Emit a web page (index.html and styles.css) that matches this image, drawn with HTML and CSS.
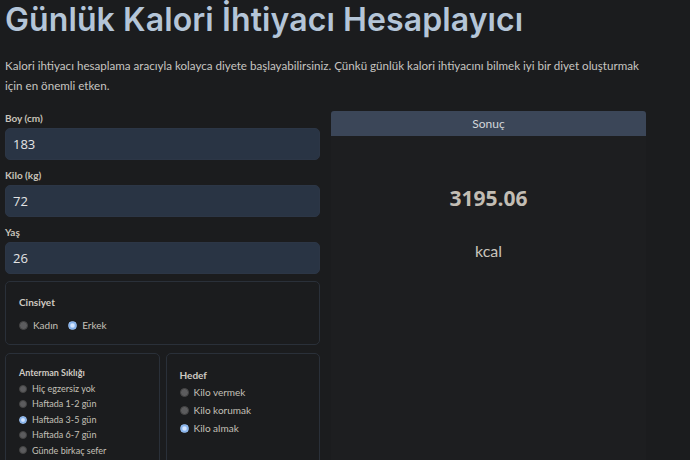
FILE: index.html
```html
<!DOCTYPE html>
<html lang="tr">
<head>
  <meta charset="utf-8">
  <title>Günlük Kalori İhtiyacı Hesaplayıcı</title>
  <link rel="stylesheet" href="styles.css">
</head>
<body>
  <h1 class="title">Günlük Kalori İhtiyacı Hesaplayıcı</h1>
  <p class="intro">Kalori ihtiyacı hesaplama aracıyla kolayca diyete başlayabilirsiniz. Çünkü günlük kalori ihtiyacını bilmek iyi bir diyet oluşturmak için en önemli etken.</p>

  <div class="layout">
    <!-- giriş formu -->
    <div class="form">
      <label class="field-label">Boy (cm)</label>
      <input class="field" type="text" value="183">
      <label class="field-label">Kilo (kg)</label>
      <input class="field" type="text" value="72">
      <label class="field-label">Yaş</label>
      <input class="field" type="text" value="26">

      <div class="box box-gender">
        <div class="box-title">Cinsiyet</div>
        <div class="inline-radios">
          <label class="radio"><input type="radio" name="gender"> Kadın</label>
          <label class="radio"><input type="radio" name="gender" checked> Erkek</label>
        </div>
      </div>

      <div class="box-row">
        <div class="box box-small">
          <div class="box-title small">Anterman Sıklığı</div>
          <label class="radio small"><input type="radio" name="act"> Hiç egzersiz yok</label>
          <label class="radio small"><input type="radio" name="act"> Haftada 1-2 gün</label>
          <label class="radio small"><input type="radio" name="act" checked> Haftada 3-5 gün</label>
          <label class="radio small"><input type="radio" name="act"> Haftada 6-7 gün</label>
          <label class="radio small"><input type="radio" name="act"> Günde birkaç sefer</label>
        </div>
        <div class="box box-goal">
          <div class="box-title goal-title">Hedef</div>
          <label class="radio goal"><input type="radio" name="goal"> Kilo vermek</label>
          <label class="radio goal"><input type="radio" name="goal"> Kilo korumak</label>
          <label class="radio goal"><input type="radio" name="goal" checked> Kilo almak</label>
        </div>
      </div>
    </div>

    <!-- sonuç kartı -->
    <div class="result">
      <div class="result-head">Sonuç</div>
      <div class="result-body">
        <div class="result-value">3195.06</div>
        <div class="result-unit">kcal</div>
      </div>
    </div>
  </div>
</body>
</html>
```

FILE: styles.css
```css
/* sayfa */
body {
  margin: 0;
  padding: 0 5px;
  background-color: #1b1c1e;
  color: #c9c5bd;
  font-family: "Lato", "Open Sans", sans-serif;
  overflow: hidden;
}

/* başlık */
.title {
  margin: 0;
  padding-top: 1px;
  font-family: "Inter", sans-serif;
  font-weight: 600;
  font-size: 32px;
  line-height: 38px;
  color: #b4c5d8;
  letter-spacing: 0.1px;
}

.intro {
  margin: 17px 0 0;
  font-size: 11.6px;
  line-height: 20px;
  color: #c7c5c1;
  width: 640px;
}

/* iki sütun */
.layout {
  display: flex;
  gap: 11px;
  margin-top: 16px;
}

.form {
  width: 315px;
  display: flex;
  flex-direction: column;
}

.field-label {
  font-size: 10px;
  font-weight: 700;
  line-height: 12px;
  color: #c8c3ba;
  margin-bottom: 4px;
}

.field {
  height: 32px;
  box-sizing: border-box;
  border: 1px solid #2c3646;
  border-radius: 5px;
  background-color: #293444;
  color: #e4e4e4;
  font-family: "Open Sans", sans-serif;
  font-size: 13px;
  padding: 0 7px;
  margin: 0 0 9px;
  outline: none;
}

/* kutular */
.box {
  box-sizing: border-box;
  border: 1px solid #2a3039;
  border-radius: 5px;
  padding: 13px 13px;
}

.box-gender {
  height: 64px;
  margin-top: -2px;
}

.box-title {
  font-size: 10px;
  font-weight: 700;
  line-height: 12px;
  color: #cfcac2;
  margin: 1px 0 10px;
}

.box-title.small {
  font-size: 9px;
  margin: 0 0 2px;
}

.box-title.goal-title {
  margin-top: 2px;
  margin-bottom: 2px;
}

.inline-radios {
  display: flex;
  gap: 10px;
}

.box-row {
  display: flex;
  gap: 6px;
  margin-top: 8px;
}

.box-small {
  width: 155px;
  height: 120px;
}

.box-goal {
  width: 155px;
  height: 120px;
}

/* radyo düğmeleri */
.radio {
  display: flex;
  align-items: center;
  gap: 5px;
  font-size: 10px;
  line-height: 14px;
  color: #c4c0b8;
}

.radio.small {
  font-size: 9px;
  line-height: 15.4px;
}

.radio.goal {
  font-size: 10px;
  line-height: 18px;
}

.radio input {
  appearance: none;
  width: 9px;
  height: 9px;
  margin: 0;
  border-radius: 50%;
  background-color: #5c5c5e;
  border: 1px solid #444;
  box-sizing: border-box;
  flex-shrink: 0;
}

.radio.small input {
  width: 8px;
  height: 8px;
}

.radio input:checked {
  background: radial-gradient(circle, #d4e5ff 30%, #76a9e8 65%);
  border-color: #9cc0f0;
}

/* sonuç */
.result {
  width: 315px;
  margin-top: -1px;
  display: flex;
  flex-direction: column;
}

.result-head {
  height: 25px;
  line-height: 25px;
  background-color: #3b4658;
  text-align: center;
  font-size: 12px;
  color: #d3d6da;
  border-radius: 3px 3px 0 0;
}

.result-body {
  background-color: #1d1e20;
  flex: 1;
  text-align: center;
}

.result-value {
  margin-top: 47px;
  font-family: "Open Sans", sans-serif;
  font-size: 21px;
  font-weight: 700;
  line-height: 30px;
  color: #c2bdb4;
}

.result-unit {
  margin-top: 28px;
  font-size: 16px;
  line-height: 20px;
  color: #c9c5bd;
}
```
